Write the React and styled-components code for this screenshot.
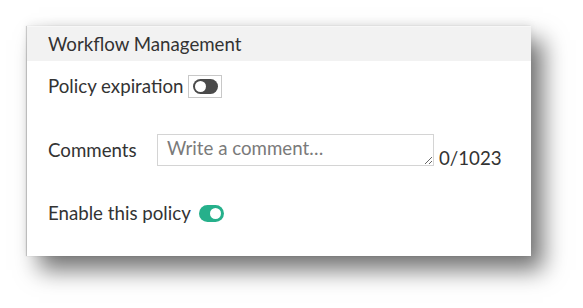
import React from "react";
import styled, { createGlobalStyle } from "styled-components";

const GlobalStyle = createGlobalStyle`
  html, body {
    margin: 0;
    padding: 0;
    background: #ffffff;
  }
  body {
    font-family: Lato, "Liberation Sans", sans-serif;
    color: #333333;
  }
`;

const fontSize = "18.7px";

const Page = styled.div`
  width: 583px;
  height: 308px;
  padding: 26px 0 0 27px;
  box-sizing: border-box;
`;

const Panel = styled.section`
  width: 504px;
  height: 230px;
  background: #ffffff;
  box-shadow: 12px 14px 22px rgba(0, 0, 0, 0.55),
    -1px 0 1px rgba(0, 0, 0, 0.18), 0 -3px 8px rgba(0, 0, 0, 0.06);
  display: flex;
  flex-direction: column;
`;

const Header = styled.header`
  height: 34px;
  display: flex;
  align-items: center;
  padding-left: 21px;
  background: #f2f2f2;
  border-top: 1px solid #f7f7f7;
  font-size: ${fontSize};
  color: #333333;
`;

const Body = styled.div`
  padding: 13px 0 0 21px;
  display: flex;
  flex-direction: column;
`;

const Row = styled.div`
  display: flex;
  align-items: ${({ $align }) => $align || "center"};
  gap: ${({ $gap }) => $gap || "5px"};
  height: ${({ $height }) => $height};
  margin-top: ${({ $top }) => $top || "0"};
  font-size: ${fontSize};
  color: #333333;
`;

const ToggleFrame = styled.span`
  display: inline-flex;
  align-items: center;
  justify-content: center;
  width: 34px;
  height: 23px;
  box-sizing: border-box;
  border: 1px solid #c8c8c8;
`;

const Switch = styled.span`
  position: relative;
  display: inline-block;
  width: ${({ $w }) => $w}px;
  height: ${({ $h }) => $h}px;
  border-radius: 999px;
  background: ${({ $on }) => ($on ? "#26b08b" : "#4a4a4a")};

  &::after {
    content: "";
    position: absolute;
    top: ${({ $inset }) => $inset}px;
    ${({ $on, $inset }) => ($on ? `right: ${$inset}px;` : `left: ${$inset}px;`)}
    width: ${({ $h, $inset }) => $h - $inset * 2}px;
    height: ${({ $h, $inset }) => $h - $inset * 2}px;
    border-radius: 50%;
    background: #ffffff;
  }
`;

const Label = styled.span`
  display: inline-block;
  width: ${({ $w }) => $w || "auto"};
`;

const TextArea = styled.textarea`
  width: 277px;
  height: 32px;
  box-sizing: border-box;
  border: 1px solid #d4d4d4;
  padding: 2px 9px;
  font-family: Lato, "Liberation Sans", sans-serif;
  font-size: ${fontSize};
  color: #333333;
  resize: both;
  outline: none;

  &::placeholder {
    color: #7a7a7a;
  }
`;

const Counter = styled.span`
  font-size: ${fontSize};
  color: #333333;
  line-height: 1;
  margin-bottom: -2px;
`;

export default function App() {
  return (
    <>
      <GlobalStyle />
      <Page>
        <Panel>
          <Header>Workflow Management</Header>
          <Body>
            <Row $height="24px">
              <Label>Policy expiration</Label>
              <ToggleFrame>
                <Switch $w={25} $h={15} $inset={2} />
              </ToggleFrame>
            </Row>
            <Row $top="36px" $align="flex-end" $gap="5px">
              <Label $w="104px" style={{ alignSelf: "center" }}>
                Comments
              </Label>
              <TextArea placeholder="Write a comment…" />
              <Counter>0/1023</Counter>
            </Row>
            <Row $top="37px" $height="20px" $gap="8px">
              <Label>Enable this policy</Label>
              <Switch $on $w={25} $h={17} $inset={3} />
            </Row>
          </Body>
        </Panel>
      </Page>
    </>
  );
}
